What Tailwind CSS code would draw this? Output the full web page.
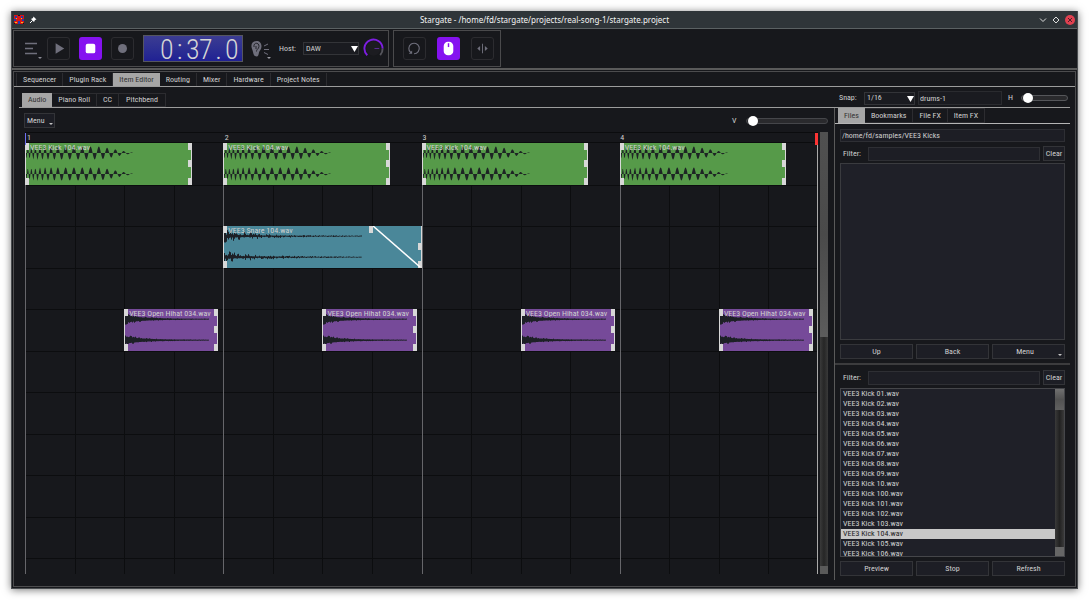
<!DOCTYPE html>
<html lang="en">
<head>
  <meta charset="UTF-8">
  <title>Stargate</title>
  <script src="https://cdn.jsdelivr.net/npm/@tailwindcss/browser@4"></script>
</head>
<body class="bg-white font-['Roboto_Condensed','Liberation_Sans_Narrow',Roboto,sans-serif] text-[8px] leading-[10px] text-[#d0d0d0]">
  <div class="flex h-screen min-h-[600px] p-[11px]">
    <div class="flex flex-1 flex-col border border-t-0 border-[#4a4d50] bg-[#17181c] shadow-[0_1px_8px_#0008]">

      <!-- title bar -->
      <header class="grid h-[18px] grid-cols-[1fr_auto_1fr] items-center border-b border-[#5b6163] bg-[#2f3539] px-[2px]">
        <div class="flex items-center gap-[5px]">
          <svg class="h-[9px] w-[10px]" viewBox="0 0 10 9"><path fill="#d91515" d="M0 0h10v9H0z"/><path fill="#2238b0" d="M1 1h2v2H1zM7 1h2v2H7zM0 4h2v2H0zM8 4h2v2H8zM4 6h2v3H4z"/><path fill="#e8c020" d="M2 3h1v1H2zM7 3h1v1H7zM1 7h2v1H1zM7 7h2v1H7z"/><path fill="#17181c" d="M4 0h2v1H4zM0 8h1v1H0zM9 8h1v1H9z"/></svg>
          <svg class="h-[8px] w-[8px]" viewBox="0 0 8 8"><path fill="#fff" d="M4.500 .5 7.500 3.500 6 4 5 6 2 3 4 2z"/><path stroke="#fff" d="M3.500 4.500 1 7"/></svg>
        </div>
        <h1 class="font-['Noto_Sans',sans-serif] text-[#f4f4f4]">Stargate - /home/fd/stargate/projects/real-song-1/stargate.project</h1>
        <div class="flex items-center justify-end gap-[5px]">
          <button aria-label="Minimize"><svg class="h-[8px] w-[8px]" viewBox="0 0 8 8"><path fill="none" stroke="#ddd" d="M1 2.500 4 5.500 7 2.500"/></svg></button>
          <button aria-label="Maximize"><svg class="h-[8px] w-[8px]" viewBox="0 0 8 8"><path fill="none" stroke="#ddd" d="M4 1 7 4 4 7 1 4z"/></svg></button>
          <button aria-label="Close"><svg class="h-[10px] w-[10px]" viewBox="0 0 10 10"><circle cx="5" cy="5" r="5" fill="#e04050"/><path stroke="#4a2228" d="M3 3 7 7M7 3 3 7"/></svg></button>
        </div>
      </header>

      <!-- transport -->
      <div class="flex gap-1 px-px py-px">
        <div class="flex h-[37px] items-center border border-[#4a4a4c] pl-[3px] pr-[4px]">
          <button aria-label="Main menu" class="mr-[4px] h-[24px] w-[26px]"><svg class="h-[24px] w-[26px]" viewBox="0 0 26 24"><path stroke="#6f6f7c" stroke-width="1.500" d="M8 6.500h12M8 11.500h8M8 16.500h12"/><path fill="#8c8c96" d="M21 20h4l-2 2z"/></svg></button>
          <button aria-label="Play" class="mr-[9px] size-[23px] rounded-[3px] border border-[#2c2c30]"><svg class="size-[21px]" viewBox="0 0 22 22"><path fill="#6f6f7c" d="M8 5.500v11L17 11z"/></svg></button>
          <button aria-label="Stop playback" class="mr-[9px] size-[23px] rounded-[3px] bg-[#8512f0]"><svg class="size-[23px]" viewBox="0 0 24 24"><rect x="7" y="7" width="10" height="10" rx="2" fill="#fff"/></svg></button>
          <button aria-label="Record" class="mr-[9px] size-[23px] rounded-[3px] border border-[#2c2c30]"><svg class="size-[21px]" viewBox="0 0 22 22"><circle cx="11" cy="11" r="4.700" fill="#6f6f7c"/></svg></button>
          <div class="h-[27px] w-[100px] border border-[#55565f] bg-linear-to-b from-[#3c3c92] to-[#202093] pr-[4px] text-right text-[28px] leading-[27px] text-[#d5d5d5]"><span class="inline-block w-[13px] text-center font-light">0</span><span class="inline-block w-[13px] text-center font-light">:</span><span class="inline-block w-[13px] text-center font-light">3</span><span class="inline-block w-[13px] text-center font-light">7</span><span class="inline-block w-[13px] text-center font-light">.</span><span class="inline-block w-[13px] text-center font-light">0</span></div>
          <button aria-label="Audition" class="ml-[5px] h-[26px] w-[24px]"><svg class="h-[26px] w-[24px]" viewBox="0 0 24 26"><path fill="#6f6f7c" d="M8.500 5C5 5 3 7.500 3.500 11c.3 2 1.200 3 1.500 5 .3 2.500 1.500 4.500 3.500 4.500s2-2 2.500-4c.3-1.500 2.500-3 2.500-6C13.500 7 11.500 5 8.500 5z"/><path fill="none" stroke="#24252b" d="M6 11c-.5-2.500 1-4 2.800-3.700C11 7.600 11.500 10 10.500 12c-.8 1.500-2 1.500-2 3.500M8 10v3"/><path stroke="#6f6f7c" d="M16 10l4-2M16 13.500h5M16 16.500l4 2"/><path fill="#9a9aa2" d="M19 21h4l-2 2z"/></svg></button>
          <label for="host" class="ml-[7px] w-[24px]">Host:</label>
          <div class="relative">
            <select id="host" class="block h-[13px] w-[56px] appearance-none border border-[#333438] bg-[#1a1b20] pl-[2px] leading-[10px]"><option>DAW</option></select>
            <svg class="pointer-events-none absolute top-[4px] right-[1px] h-[6px] w-[7px]" viewBox="0 0 7 6"><path fill="#fff" d="M0 0h7L3.500 6z"/></svg>
          </div>
          <svg class="ml-[4px] size-[21px]" viewBox="0 0 22 22"><circle cx="11" cy="11" r="7.500" fill="#1c1c21"/><path fill="none" stroke="#55555c" stroke-width="2" d="M20.500 11A9.500 9.500 0 0 1 18 18"/><path fill="none" stroke="#7d1ee0" stroke-width="2" d="M4.500 18A9.500 9.500 0 1 1 20.500 11"/><path stroke="#5c2c9a" d="M12 11h5"/></svg>
        </div>
        <div class="flex h-[37px] items-center gap-[11px] border border-[#4a4a4c] pl-[9px] pr-[6px]">
          <button aria-label="Loop" class="size-[23px] rounded-[3px] border border-[#2c2c30]"><svg class="size-[21px]" viewBox="0 0 22 22"><path fill="none" stroke="#6f6f7c" stroke-width="1.200" d="M7 15.200A5.500 5.500 0 1 1 10.500 16.500"/><path fill="#6f6f7c" d="M5 16.500h3.500V13z"/></svg></button>
          <button aria-label="Mouse tool" class="size-[23px] rounded-[3px] bg-[#8512f0]"><svg class="size-[23px]" viewBox="0 0 24 24"><rect x="7" y="5" width="10" height="14" rx="4.500" fill="#fff"/><path stroke="#8512f0" stroke-width="1.500" d="M12 6.500v4"/></svg></button>
          <button aria-label="Split tool" class="size-[23px] rounded-[3px] border border-[#2c2c30]"><svg class="size-[21px]" viewBox="0 0 22 22"><path stroke="#6f6f7c" d="M11 6v10"/><path fill="#6f6f7c" d="M8.500 8.500v5L5.500 11zM13.500 8.500v5l3-2.500z"/></svg></button>
        </div>
      </div>

      <!-- workspace -->
      <div class="flex min-h-0 flex-1 flex-col border-t-2 border-[#5a5a5a] p-px">
        <div class="flex min-h-0 flex-1 flex-col border border-[#4c4c4e]">
          <nav class="flex border-b border-[#9c9c9c] pt-px pl-[2px]">
            <button class="h-[13px] border border-y-0 border-[#2c2c30] px-[6px]">Sequencer</button>
            <button class="h-[13px] border-r border-[#2c2c30] px-[6px]">Plugin Rack</button>
            <button class="h-[13px] bg-[#a6a6a6] px-[6px] text-[#333]">Item Editor</button>
            <button class="h-[13px] border-r border-[#2c2c30] px-[6px]">Routing</button>
            <button class="h-[13px] border-r border-[#2c2c30] px-[6px]">Mixer</button>
            <button class="h-[13px] border-r border-[#2c2c30] px-[6px]">Hardware</button>
            <button class="h-[13px] border-r border-[#2c2c30] px-[6px]">Project Notes</button>
          </nav>

          <div class="ml-[5px] mr-[5px] flex items-end border-b border-[#9c9c9c] pt-[4px]">
            <nav class="flex flex-1 pl-[3px]">
              <button class="h-[14px] bg-[#a6a6a6] px-[6px] text-[#333]">Audio</button>
              <button class="h-[14px] border border-l-0 border-[#2c2c30] px-[6px]">Piano Roll</button>
              <button class="h-[14px] border border-l-0 border-[#2c2c30] px-[6px]">CC</button>
              <button class="h-[14px] border border-l-0 border-[#2c2c30] px-[7px]">Pitchbend</button>
            </nav>
            <div class="mb-[2px] flex w-[231px] items-center">
              <label for="snap" class="w-[25px]">Snap:</label>
              <div class="relative">
                <select id="snap" class="block h-[13px] w-[51px] appearance-none border border-[#333438] bg-[#1a1b20] pl-[2px] leading-[10px]"><option>1/16</option></select>
                <svg class="pointer-events-none absolute top-[4px] right-[1px] h-[6px] w-[7px]" viewBox="0 0 7 6"><path fill="#fff" d="M0 0h7L3.500 6z"/></svg>
              </div>
              <input aria-label="Item name" value="drums-1" class="ml-[3px] h-[14px] w-[84px] border border-[#2a2b2f] bg-[#1a1b20] px-px">
              <label for="hzoom" class="ml-[6px] w-[13px]">H</label>
              <input id="hzoom" type="range" value="2" class="h-[12px] w-[47px] appearance-none bg-transparent [&::-webkit-slider-runnable-track]:h-[6px] [&::-webkit-slider-runnable-track]:rounded-full [&::-webkit-slider-runnable-track]:border [&::-webkit-slider-runnable-track]:border-[#55565a] [&::-webkit-slider-runnable-track]:bg-[#2a2a2d] [&::-webkit-slider-thumb]:-mt-[3px] [&::-webkit-slider-thumb]:size-[10px] [&::-webkit-slider-thumb]:appearance-none [&::-webkit-slider-thumb]:rounded-full [&::-webkit-slider-thumb]:bg-white">
            </div>
          </div>

          <div class="ml-[9px] mr-[5px] flex min-h-0 flex-1 pb-[6px]">
            <!-- item editor -->
            <section class="mr-[6px] mb-[6px] flex flex-1 flex-col">
              <div class="mt-[5px] mb-[4px] flex items-center justify-between">
                <button class="ml-px flex h-[15px] items-center border border-[#333438] bg-[#1c1d24] pl-[2px] pr-px">Menu<svg class="mt-[6px] ml-[4px] h-[2px] w-[4px]" viewBox="0 0 4 2"><path fill="#c4c4c4" d="M0 0h4L2 2z"/></svg></button>
                <div class="flex items-center">
                  <label for="vzoom" class="w-[14px]">V</label>
                  <input id="vzoom" type="range" value="2" class="h-[12px] w-[82px] appearance-none bg-transparent [&::-webkit-slider-runnable-track]:h-[6px] [&::-webkit-slider-runnable-track]:rounded-full [&::-webkit-slider-runnable-track]:border [&::-webkit-slider-runnable-track]:border-[#45464a] [&::-webkit-slider-runnable-track]:bg-[#2a2a2d] [&::-webkit-slider-thumb]:-mt-[3px] [&::-webkit-slider-thumb]:size-[10px] [&::-webkit-slider-thumb]:appearance-none [&::-webkit-slider-thumb]:rounded-full [&::-webkit-slider-thumb]:bg-white">
                </div>
              </div>
              <div class="ml-[2px] flex flex-1">
                <div class="relative flex flex-1 flex-col border-t border-[#0b0c0e]">
                  <div id="ruler" class="grid h-[10px] grid-cols-4 border-b border-[#0b0c0e] pl-[2px]">
                    <span>1</span><span>2</span><span>3</span><span>4</span>
                  </div>
                  <div id="grid" class="relative flex-1 overflow-hidden"></div>
                  <div class="absolute top-0 left-0 h-[12px] w-px bg-[#6f6ff0]"></div>
                  <div class="absolute top-0 right-0 h-[12px] w-[3px] bg-[#fb3434]"></div>
                </div>
                <div class="ml-[2px] flex w-[8px] flex-col bg-linear-to-r from-[#3a3a3a] via-[#262626] to-[#3a3a3a]">
                  <div class="h-[205px] bg-linear-to-b from-[#505050] via-[#4a4a4a] to-[#5c5c5c]"></div>
                  <div class="mt-auto h-[8px] bg-[#5a5a5a]"></div>
                </div>
              </div>
            </section>

            <!-- side panel -->
            <aside class="flex w-[236px] flex-col border-l border-[#5a5a5a]">
              <nav class="flex border-b border-[#b5b5b5] pl-[3px]">
                <button class="h-[15px] bg-[#a6a6a6] px-[6px] text-[#333]">Files</button>
                <button class="h-[15px] border border-l-0 border-[#2c2c30] px-[6px]">Bookmarks</button>
                <button class="h-[15px] border border-l-0 border-[#2c2c30] px-[6px]">File FX</button>
                <button class="h-[15px] border border-l-0 border-[#2c2c30] px-[6px]">Item FX</button>
              </nav>
              <div class="flex flex-col px-[5px] pt-[5px] pb-[4px]">
                <input aria-label="Folder" value="/home/fd/samples/VEE3 Kicks" class="h-[13px] border border-[#2e2f34] bg-[#1d1e25] px-px">
                <div class="mt-[4px] flex items-center">
                  <label for="folder-filter" class="w-[28px] pl-[3px]">Filter:</label>
                  <input id="folder-filter" class="h-[14px] min-w-0 flex-1 border border-[#2e2f34] bg-[#1d1e25]">
                  <button class="ml-[3px] h-[15px] w-[22px] border border-[#333438] bg-[#1d1e25]">Clear</button>
                </div>
                <div class="mt-[2px] h-[177px] border border-[#3a3b3f] bg-[#1f2028]"></div>
                <div class="mt-[4px] grid grid-cols-3 gap-[3px]">
                  <button class="h-[15px] border border-[#333438] bg-[#1d1e25]">Up</button>
                  <button class="h-[15px] border border-[#333438] bg-[#1d1e25]">Back</button>
                  <button class="relative h-[15px] border border-[#333438] bg-[#1d1e25] pr-[7px]">Menu<svg class="absolute right-[2px] bottom-[2px] h-[2px] w-[4px]" viewBox="0 0 4 2"><path fill="#c4c4c4" d="M0 0h4L2 2z"/></svg></button>
                </div>
              </div>
              <div class="mb-[4px] flex min-h-0 flex-1 flex-col border-t-2 border-[#3c3c3e] px-[5px] pt-[5px]">
                <div class="flex items-center">
                  <label for="file-filter" class="w-[28px] pl-[3px]">Filter:</label>
                  <input id="file-filter" class="h-[14px] min-w-0 flex-1 border border-[#2e2f34] bg-[#1d1e25]">
                  <button class="ml-[3px] h-[15px] w-[22px] border border-[#333438] bg-[#1d1e25]">Clear</button>
                </div>
                <div class="mt-[3px] flex min-h-0 flex-1 border border-[#45464a] bg-[#1f2028]">
                  <ul id="files" class="flex-1 overflow-hidden"></ul>
                  <div class="flex w-[9px] flex-col justify-between bg-linear-to-r from-[#3a3a3a] via-[#222] to-[#3a3a3a]">
                    <div class="h-[21px] bg-linear-to-b from-[#707070] via-[#525252] to-[#606060]"></div>
                    <div class="h-[9px] bg-[#666]"></div>
                  </div>
                </div>
                <div class="mt-[4px] grid grid-cols-3 gap-[3px]">
                  <button class="h-[15px] border border-[#333438] bg-[#1d1e25]">Preview</button>
                  <button class="h-[15px] border border-[#333438] bg-[#1d1e25]">Stop</button>
                  <button class="h-[15px] border border-[#333438] bg-[#1d1e25]">Refresh</button>
                </div>
              </div>
            </aside>
          </div>
        </div>
      </div>
    </div>
  </div>

  <script>
    const BARS = 4;
    const grid = document.getElementById("grid");
    const laneTop = n => Math.round(n * 41.5);

    // lanes, beats, then bar lines over them
    let html = "";
    for (let i = 1; i <= 10; i++) {
      html += `<div class="absolute inset-x-0 h-px bg-[#0c0d0f]" style="top:${laneTop(i)}px"></div>`;
    }
    for (let i = 0; i < BARS * 4; i++) {
      const cls = i % 4 ? "bg-[#0c0d0f]" : "bg-[#66666a]";
      html += `<div class="absolute inset-y-0 w-px ${cls}" style="left:${i / BARS / 4 * 100}%"></div>`;
    }
    html += `<div class="absolute inset-y-0 right-0 w-px bg-[#aaa]"></div>`;

    function noise(i) {
      const n = Math.sin(i * 12.9898) * 43758.5453;
      return n - Math.floor(n);
    }

    // filled between the centre line and the wave
    function kickWave(mid) {
      let d = `M0 ${mid}`, phase = 0;
      for (let x = 0; x < 108; x += 0.5) {
        const period = 3 + Math.min(x, 40) / 40 * 5.3;
        phase += Math.PI / period;
        let amp = x < 15 ? 5 + noise(x) * 2 : 6.5;
        if (x > 75) amp *= Math.max(0, (108 - x) / 33);
        d += `L${x} ${(mid + amp * Math.sin(phase)).toFixed(1)}`;
      }
      return `<path d="${d}V${mid}z" fill="#1d2424"/>`;
    }

    function burstWave(mid, length, size, decay, floor) {
      let d = "";
      for (let x = 0; x < length; x++) {
        const amp = size * Math.exp(-x / decay) + 0.4;
        const up = amp * (floor + noise(x + mid) ** 2 * (1 - floor));
        const down = amp * (floor + noise(x * 3 + mid) ** 2 * (1 - floor));
        d += `M${x + 0.5} ${(mid - up).toFixed(1)}V${(mid + down + 0.3).toFixed(1)}`;
      }
      return `<path d="${d}" fill="none" stroke="#1d2026"/>`;
    }

    const kinds = {
      kick: { name: "VEE3 Kick 104.wav", color: "bg-[#569a49]", wave: kickWave(10) + kickWave(31) },
      snare: { name: "VEE3 Snare 104.wav", color: "bg-[#4a8799]", wave: burstWave(10, 138, 6, 36, 0.2) + burstWave(31, 138, 6, 36, 0.2) },
      hihat: { name: "VEE3 Open Hihat 034.wav", color: "bg-[#764a99]", wave: burstWave(10, 84, 5, 20, 0.6) + burstWave(31, 84, 5, 20, 0.6) },
    };
    // start and length in bars
    const items = [
      { kind: "kick", lane: 0, start: 0, length: 0.84 },
      { kind: "kick", lane: 0, start: 1, length: 0.84 },
      { kind: "kick", lane: 0, start: 2, length: 0.84 },
      { kind: "kick", lane: 0, start: 3, length: 0.84 },
      { kind: "snare", lane: 2, start: 1, length: 1, fade: 0.75 },
      { kind: "hihat", lane: 4, start: 0.5, length: 0.475 },
      { kind: "hihat", lane: 4, start: 1.5, length: 0.475 },
      { kind: "hihat", lane: 4, start: 2.5, length: 0.475 },
      { kind: "hihat", lane: 4, start: 3.5, length: 0.475 },
    ];
    for (const item of items) {
      const kind = kinds[item.kind];
      html += `<div class="absolute h-[42px] overflow-hidden border-x border-[#d8d8d8] ${kind.color}" style="top:${laneTop(item.lane)}px;left:${item.start / BARS * 100}%;width:${item.length / BARS * 100}%">
        <svg class="absolute inset-0 h-[42px] w-full">${kind.wave}</svg>
        <span class="absolute top-0 left-[4px] whitespace-nowrap">${kind.name}</span>
        <i class="absolute top-0 left-0 h-[7px] w-[3px] bg-[#d8d8d8]"></i>
        <i class="absolute bottom-0 left-0 h-[7px] w-[3px] bg-[#d8d8d8]"></i>
        <i class="absolute top-[17px] right-0 h-[7px] w-[3px] bg-[#d8d8d8]"></i>
        <i class="absolute bottom-0 right-0 h-[7px] w-[3px] bg-[#d8d8d8]"></i>`;
      if (item.fade) {
        html += `<svg class="absolute top-0 right-0 h-[42px] w-1/4" viewBox="0 0 48 42" preserveAspectRatio="none"><path stroke="#fff" stroke-width="1.500" d="M2 0 48 41"/></svg>
          <i class="absolute top-0 h-[7px] w-[4px] bg-[#d8d8d8]" style="left:${item.fade * 100 - 1}%"></i>`;
      } else {
        html += `<i class="absolute top-0 right-0 h-[7px] w-[3px] bg-[#d8d8d8]"></i>`;
      }
      html += `</div>`;
    }
    grid.innerHTML = html;

    const numbers = ["01", "02", "03", "04", "05", "06", "07", "08", "09", "10", "100", "101", "102", "103", "104", "105", "106"];
    document.getElementById("files").innerHTML = numbers.map(n =>
      `<li class="h-[10px] pl-[2px] ${n === "104" ? "bg-[#c8c8c8] text-[#222]" : ""}">VEE3 Kick ${n}.wav</li>`
    ).join("");
  </script>
</body>
</html>
